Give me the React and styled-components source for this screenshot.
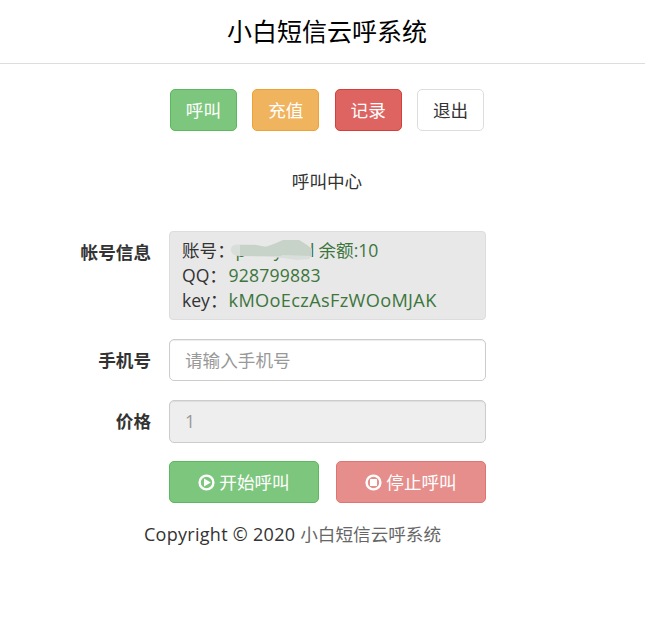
import React from 'react';
import styled, { createGlobalStyle } from 'styled-components';

const GlobalStyle = createGlobalStyle`
    * {
        box-sizing: border-box;
    }
    body {
        margin: 0;
        background: #fff;
        color: #333;
        font-family: 'Open Sans', 'Noto Sans CJK SC', sans-serif;
        font-size: 17.6px;
        line-height: 25px;
    }
`

const Header = styled.header`
    height: 64px;
    padding-left: 9px;
    border-bottom: 1px solid #ddd;
    color: #000;
    font-size: 25px;
    line-height: 62px;
    text-align: center;
`

const Nav = styled.nav`
    display: flex;
    justify-content: center;
    gap: 15.4px;
    padding: 25px 0 0 9px;
`

const colors = {
    success: { background: '#7dc67d', border: '#5cb85c', text: '#fff' },
    warning: { background: '#f0b45f', border: '#eea236', text: '#fff' },
    danger: { background: '#dd6461', border: '#d43f3a', text: '#fff' },
    plain: { background: '#fff', border: '#ddd', text: '#333' },
}

const Button = styled.button`
    display: flex;
    align-items: center;
    justify-content: center;
    gap: 4px;
    width: ${props => props.$width || 67}px;
    height: 42px;
    padding: 0;
    border: 1px solid ${props => colors[props.$kind].border};
    border-radius: 5px;
    background: ${props => colors[props.$kind].background};
    color: ${props => colors[props.$kind].text};
    font: inherit;
    opacity: ${props => props.disabled ? 0.72 : 1};
    cursor: ${props => props.disabled ? 'not-allowed' : 'pointer'};
`

const Title = styled.p`
    margin: 38px 0 37px;
    padding-left: 9px;
    text-align: center;
`

const Form = styled.form`
    display: grid;
    grid-template-columns: 151px 317px;
    column-gap: 18px;
    row-gap: 19px;
`

const Label = styled.label`
    padding-top: 9px;
    font-weight: bold;
    text-align: right;
`

const Info = styled.div`
    height: 89px;
    padding: 6px 12px;
    border: 1px solid #ddd;
    border-radius: 4px;
    background: #e8e8e8;
`

const InfoRow = styled.div`
    display: flex;
    height: 25px;
    white-space: pre;
`

const InfoKey = styled.span`
    width: 46.5px;
`

const Value = styled.span`
    color: #3c763d;
    font-size: ${props => props.$size || 17.6}px;
    letter-spacing: ${props => props.$spacing || 0}px;
`

const Account = styled.span`
    position: relative;
    display: flex;
    justify-content: space-between;
    width: 90px;
    padding: 0 4px 0 7px;
    color: #3c763d;
`

const Smudge = styled.svg`
    position: absolute;
    top: 1px;
    left: 0;
`

const Input = styled.input`
    width: 100%;
    height: ${props => props.disabled ? 43 : 42}px;
    padding: ${props => props.disabled ? '0 15px 2px' : '0 15px'};
    border: 1px solid #ccc;
    border-radius: 5px;
    background: ${props => props.disabled ? '#eee' : '#fff'};
    box-shadow: inset 0 1px 1px rgba(0, 0, 0, 0.075);
    color: #999;
    font: inherit;
    &::placeholder {
        color: #999;
        opacity: 1;
    }
`

const Actions = styled.div`
    display: flex;
    grid-column: 2;
    justify-content: space-between;
    margin-top: -1px;
`

const Footer = styled.footer`
    padding: 19px 0 0 144px;
    white-space: pre;
`

const Copyright = styled.span`
    font-size: 18px;
    letter-spacing: 0.28px;
`

const FooterLink = styled.a`
    color: #666;
`

function PlayIcon() {
    return (
        <svg width='17' height='17' viewBox='0 0 17 17'>
            <circle cx='8.5' cy='8.5' r='6.9' fill='none' stroke='currentColor' strokeWidth='2.4' />
            <path d='M6 4.4v8.2l6.8-4.1z' fill='currentColor' />
        </svg>
    )
}

function StopIcon() {
    return (
        <svg width='17' height='17' viewBox='0 0 17 17'>
            <circle cx='8.5' cy='8.5' r='6.9' fill='none' stroke='currentColor' strokeWidth='2.4' />
            <rect x='5' y='5' width='7' height='7' rx='0.5' fill='currentColor' />
        </svg>
    )
}

export default function App() {
    return (
        <>
            <GlobalStyle />
            <Header>小白短信云呼系统</Header>
            <Nav>
                <Button $kind='success'>呼叫</Button>
                <Button $kind='warning'>充值</Button>
                <Button $kind='danger'>记录</Button>
                <Button $kind='plain'>退出</Button>
            </Nav>
            <Title>呼叫中心</Title>
            <Form onSubmit={e => e.preventDefault()}>
                <Label>帐号信息</Label>
                <Info>
                    <InfoRow>
                        <InfoKey>账号：</InfoKey>
                        <Account>
                            <span>p</span>
                            <span>y</span>
                            <span>l</span>
                            <Smudge width='86' height='22' viewBox='0 0 86 22'>
                                <path d='M7 5.5C3 6 1 9 2 12s4 5 8 5l32 1 12 1 14 2 12-1 3-3V10l-5-4-8-5H55L45 5l-9 2.5-11-2z' fill='#d8dfda' />
                                <path d='M11 6h16l10 2 8-3 9-4h16l8 5 5 4v7l-29-1-3 1H11z' fill='#c7d2c8' />
                            </Smudge>
                        </Account>
                        <Value>余额:10</Value>
                    </InfoRow>
                    <InfoRow>
                        <InfoKey>QQ：</InfoKey>
                        <Value $spacing={0.2}>928799883</Value>
                    </InfoRow>
                    <InfoRow>
                        <InfoKey>key：</InfoKey>
                        <Value $size={18.2} $spacing={0.33}>kMOoEczAsFzWOoMJAK</Value>
                    </InfoRow>
                </Info>
                <Label htmlFor='phone'>手机号</Label>
                <Input id='phone' placeholder='请输入手机号' />
                <Label htmlFor='price'>价格</Label>
                <Input id='price' defaultValue='1' disabled />
                <Actions>
                    <Button $kind='success' $width={150}><PlayIcon />开始呼叫</Button>
                    <Button $kind='danger' $width={150} disabled><StopIcon />停止呼叫</Button>
                </Actions>
            </Form>
            <Footer><Copyright>Copyright © 2020 </Copyright><FooterLink>小白短信云呼系统</FooterLink></Footer>
        </>
    )
}
